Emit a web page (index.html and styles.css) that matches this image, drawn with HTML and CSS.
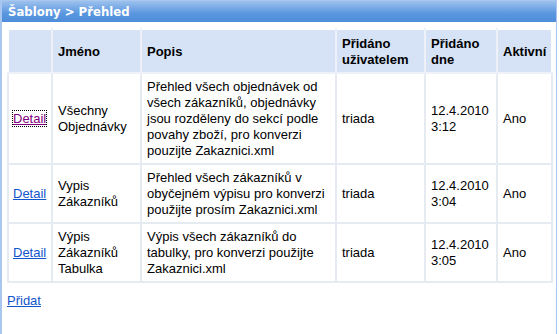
FILE: index.html
```html
<!DOCTYPE html>
<html>
<head>
    <meta charset="utf-8">
    <title>Šablony</title>
    <link rel="stylesheet" href="styles.css">
</head>
<body>
    <div class="panel">
        <div class="panel-title">Šablony &gt; Přehled</div>
        <div class="panel-body">
            <table class="grid">
                <colgroup>
                    <col class="c-detail">
                    <col class="c-name">
                    <col class="c-desc">
                    <col class="c-user">
                    <col class="c-date">
                    <col class="c-active">
                </colgroup>
                <thead>
                    <tr>
                        <th></th>
                        <th>Jméno</th>
                        <th>Popis</th>
                        <th>Přidáno uživatelem</th>
                        <th>Přidáno dne</th>
                        <th>Aktivní</th>
                    </tr>
                </thead>
                <tbody>
                    <tr>
                        <td class="link-cell"><a href="#" class="visited focused">Detail</a></td>
                        <td>Všechny Objednávky</td>
                        <td>Přehled všech objednávek od všech zákazníků, objednávky jsou rozděleny do sekcí podle povahy zboží, pro konverzi pouzijte Zakaznici.xml</td>
                        <td>triada</td>
                        <td>12.4.2010 3:12</td>
                        <td>Ano</td>
                    </tr>
                    <tr>
                        <td class="link-cell"><a href="#">Detail</a></td>
                        <td>Vypis Zákazníků</td>
                        <td>Přehled všech zákazníků v obyčejném výpisu pro konverzi použijte prosím Zakaznici.xml</td>
                        <td>triada</td>
                        <td>12.4.2010 3:04</td>
                        <td>Ano</td>
                    </tr>
                    <tr>
                        <td class="link-cell"><a href="#">Detail</a></td>
                        <td>Výpis Zákazníků Tabulka</td>
                        <td>Výpis všech zákazníků do tabulky, pro konverzi použijte Zakaznici.xml</td>
                        <td>triada</td>
                        <td>12.4.2010 3:05</td>
                        <td>Ano</td>
                    </tr>
                </tbody>
            </table>
            <div class="actions"><a href="#">Přidat</a></div>
        </div>
    </div>
</body>
</html>
```

FILE: styles.css
```css
* {
    box-sizing: border-box;
    margin: 0;
    padding: 0;
}

body {
    font-family: "Liberation Sans", Arial, sans-serif;
    font-size: 13px;
    color: #000;
    background-color: #fff;
    width: 559px;
    height: 334px;
    overflow: hidden;
}

.panel {
    width: 557px;
    height: 334px;
    border: 1px solid #a9c6ee;
    border-bottom: none;
    border-left-width: 2px;
}

.panel-title {
    height: 22px;
    padding: 3px 0 0 6px;
    background: linear-gradient(#9cc1ee, #5a96df 60%, #4f8ddb);
    color: #fff;
    font-family: "DejaVu Sans Condensed", "Liberation Sans", sans-serif;
    font-weight: bold;
    font-size: 13px;
    line-height: 16px;
    border-bottom: 1px solid #fff;
}

.panel-body {
    padding: 5px 5px 0 5px;
}

a {
    color: #1155cc;
}

a.visited {
    color: #800080;
}

a.focused {
    outline: 1px dotted #000;
}

.grid {
    width: 544px;
    border-collapse: collapse;
    table-layout: fixed;
}

.c-detail { width: 44px; }
.c-name { width: 89px; }
.c-desc { width: 195px; }
.c-user { width: 89px; }
.c-date { width: 72px; }
.c-active { width: 55px; }

.grid th,
.grid td {
    border: 2px solid #e6eaf1;
    padding: 5px 5px 4px 5px;
    line-height: 16px;
    text-align: left;
    vertical-align: middle;
}

.grid th {
    background-color: #d6e3f6;
    font-weight: bold;
    padding-top: 6px;
    padding-bottom: 4px;
    border-color: #eef2f8;
    border-top-color: #fff;
}

.grid th:first-child {
    border-left-color: #fff;
}

.grid th:last-child {
    border-right-color: #fff;
}

.grid td.link-cell {
    padding-left: 4px;
    padding-right: 2px;
}

.actions {
    padding-top: 10px;
}
```
